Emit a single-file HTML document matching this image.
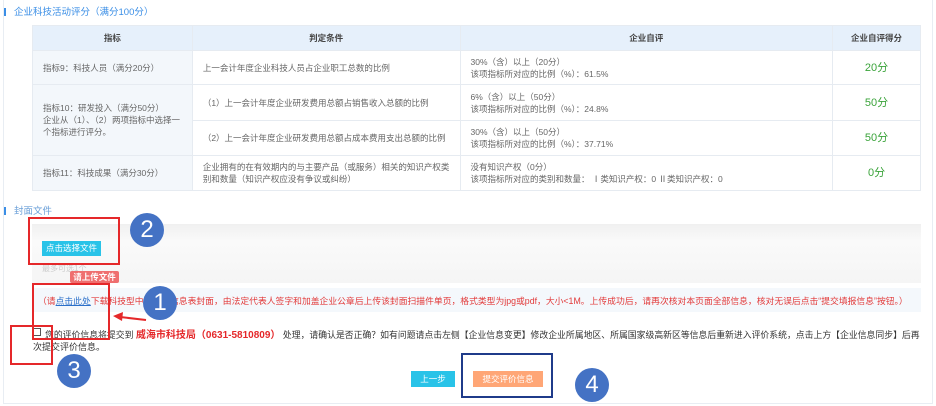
<!DOCTYPE html>
<html><head><meta charset="utf-8"><style>
*{margin:0;padding:0;box-sizing:border-box}
body{width:936px;height:406px;background:#fff;font-family:"Liberation Sans","Noto Sans CJK SC",sans-serif;position:relative;overflow:hidden;color:#555}
.abs{position:absolute}
.frame{left:3px;top:0;width:930px;height:404px;border:1px solid #e8edf3;border-top:none}
.ttl{font-size:9.5px;color:#3a8ee6}
.bar{width:2px;height:8px;background:#3a8ee6}
table{position:absolute;left:32px;top:25px;width:889px;border-collapse:collapse;font-size:8.5px;color:#666}
td,th{border:1px solid #e6ebf1;padding:0 10px;text-align:left;font-weight:normal;line-height:12px}
th{background:#e6f0fb;height:25px;text-align:center;font-weight:bold;color:#444}
td.l{background:#f3f7fb}
td.s{text-align:center;color:#3aa33a;font-size:11px}
.circ{width:34px;height:34px;border-radius:50%;background:#4472c4;color:#fff;font-size:24px;text-align:center;line-height:34px;font-family:"Liberation Sans",sans-serif}
.rbox{border:2px solid #e5282a}
</style></head><body>
<div class="abs frame"></div>
<div class="abs bar" style="left:4px;top:8px"></div>
<div class="abs ttl" style="left:14px;top:4px">企业科技活动评分（满分100分）</div>
<table>
<tr><th style="width:160px">指标</th><th style="width:268px">判定条件</th><th style="width:373px">企业自评</th><th style="width:88px">企业自评得分</th></tr>
<tr style="height:34px"><td class="l">指标9：科技人员（满分20分）</td><td>上一会计年度企业科技人员占企业职工总数的比例</td><td>30%（含）以上（20分）<br>该项指标所对应的比例（%）：61.5%</td><td class="s">20分</td></tr>
<tr style="height:36px"><td class="l" rowspan="2">指标10：研发投入（满分50分）<br>企业从（1）、（2）两项指标中选择一个指标进行评分。</td><td>（1）上一会计年度企业研发费用总额占销售收入总额的比例</td><td>6%（含）以上（50分）<br>该项指标所对应的比例（%）：24.8%</td><td class="s">50分</td></tr>
<tr style="height:35px"><td>（2）上一会计年度企业研发费用总额占成本费用支出总额的比例</td><td>30%（含）以上（50分）<br>该项指标所对应的比例（%）：37.71%</td><td class="s">50分</td></tr>
<tr style="height:35px"><td class="l">指标11：科技成果（满分30分）</td><td>企业拥有的在有效期内的与主要产品（或服务）相关的知识产权类别和数量（知识产权应没有争议或纠纷）</td><td>没有知识产权（0分）<br>该项指标所对应的类别和数量： Ⅰ类知识产权：0 Ⅱ类知识产权：0</td><td class="s">0分</td></tr>
</table>
<div class="abs bar" style="left:4px;top:207px"></div>
<div class="abs ttl" style="left:14px;top:203px;color:#6a9fd8">封面文件</div>
<div class="abs" style="left:32px;top:224px;width:889px;height:59px;background:linear-gradient(#f0f0f0,#fafafa 30%,#f5f5f5)"></div>
<div class="abs" style="left:42px;top:241px;width:59px;height:15px;background:#29c3e8;color:#fff;font-size:8.5px;text-align:center;line-height:15px">点击选择文件</div>
<div class="abs" style="left:42px;top:263px;font-size:8px;color:#ccc">最多可选1个</div>
<div class="abs" style="left:70px;top:271px;width:49px;height:12px;background:#ef6f6f;color:#fff;font-size:8.5px;font-weight:bold;text-align:center;line-height:12px;border-radius:2px">请上传文件</div>
<div class="abs" style="left:32px;top:288px;width:889px;height:24px;background:#f4f8fc"></div>
<div class="abs" style="left:38px;top:294px;font-size:8.8px;color:#e23a3a;white-space:nowrap">（请<span style="color:#2a6fc9;text-decoration:underline">点击此处</span>下载科技型中小企业信息表封面，由法定代表人签字和加盖企业公章后上传该封面扫描件单页，格式类型为jpg或pdf，大小&lt;1M。上传成功后，请再次核对本页面全部信息，核对无误后点击“提交填报信息”按钮。）</div>
<div class="abs" style="left:33px;top:328px;width:8px;height:8px;border:1px solid #555;background:#fff"></div>
<div class="abs" style="left:45px;top:326px;font-size:8.85px;color:#333;white-space:nowrap">您的评价信息将提交到 <b style="color:#e5282a;font-size:10px">威海市科技局（0631-5810809）</b> 处理，请确认是否正确？如有问题请点击左侧【企业信息变更】修改企业所属地区、所属国家级高新区等信息后重新进入评价系统，点击上方【企业信息同步】后再</div>
<div class="abs" style="left:33px;top:340px;font-size:9px;color:#333">次提交评价信息。</div>
<div class="abs" style="left:411px;top:371px;width:44px;height:16px;background:#29c3e8;color:#fff;font-size:8.5px;text-align:center;line-height:16px">上一步</div>
<div class="abs" style="left:473px;top:371px;width:70px;height:16px;background:#ffa676;color:#fff;font-size:8.5px;text-align:center;line-height:16px">提交评价信息</div>
<div class="abs rbox" style="left:28px;top:217px;width:92px;height:48px"></div>
<div class="abs rbox" style="left:32px;top:283px;width:78px;height:57px"></div>
<div class="abs rbox" style="left:10px;top:325px;width:43px;height:40px"></div>
<div class="abs" style="left:461px;top:353px;width:92px;height:45px;border:2px solid #1f3b8a"></div>
<svg class="abs" style="left:110px;top:308px" width="40" height="15"><path d="M36 12 L10 9" stroke="#e5282a" stroke-width="2"/><path d="M3 8 L13 4 L12 13 Z" fill="#e5282a"/></svg>
<div class="abs circ" style="left:130px;top:213px">2</div>
<div class="abs circ" style="left:143px;top:286px">1</div>
<div class="abs circ" style="left:57px;top:354px">3</div>
<div class="abs circ" style="left:575px;top:368px">4</div>
</body></html>
